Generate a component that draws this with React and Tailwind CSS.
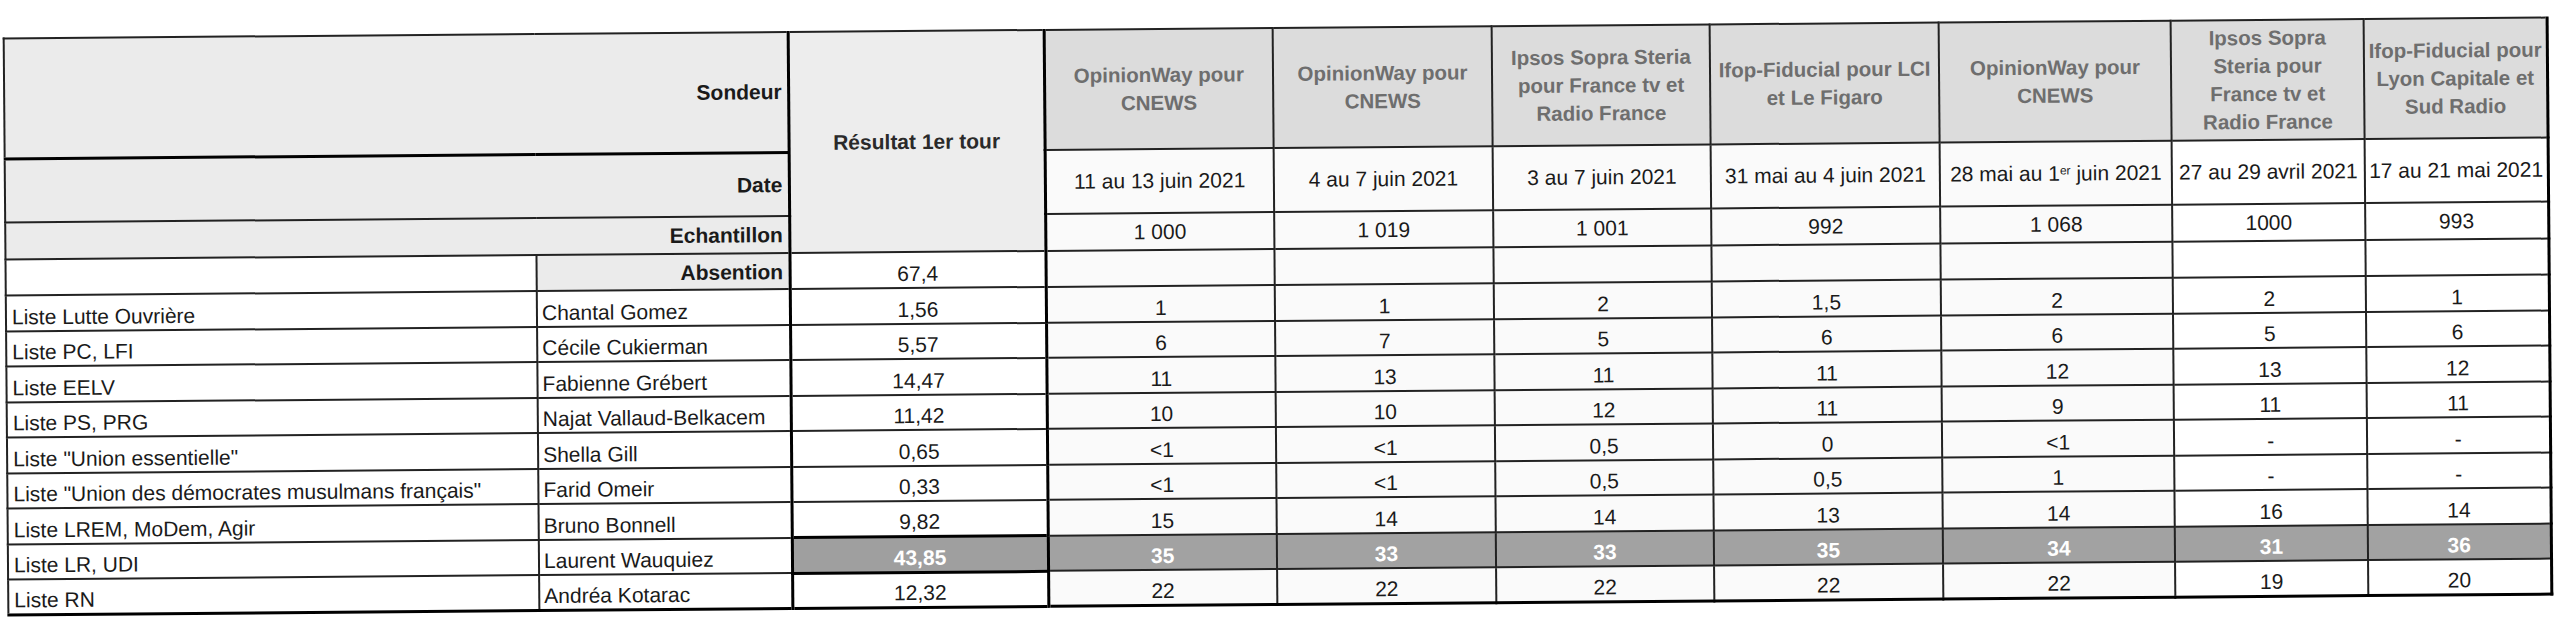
import React from 'react';

const polls = [
    { head: ['OpinionWay pour', 'CNEWS'], date: '11 au 13 juin 2021', n: '1 000', w: 'w-[229px]', tint: true },
    { head: ['OpinionWay pour', 'CNEWS'], date: '4 au 7 juin 2021', n: '1 019', w: 'w-[219px]', tint: true },
    { head: ['Ipsos Sopra Steria', 'pour France tv et', 'Radio France'], date: '3 au 7 juin 2021', n: '1 001', w: 'w-[218px]', tint: true },
    { head: ['Ifop-Fiducial pour LCI', 'et Le Figaro'], date: '31 mai au 4 juin 2021', n: '992', w: 'w-[229px]', tint: true },
    { head: ['OpinionWay pour', 'CNEWS'], date: 'er', n: '1 068', w: 'w-[232px]', tint: true },
    { head: ['Ipsos Sopra', 'Steria pour', 'France tv et', 'Radio France'], date: '27 au 29 avril 2021', n: '1000', w: 'w-[193px]', tint: false },
    { head: ['Ifop-Fiducial pour', 'Lyon Capitale et', 'Sud Radio'], date: '17 au 21 mai 2021', n: '993', w: 'w-[183px]', tint: false },
];

const rows = [
    ['Liste Lutte Ouvrière', 'Chantal Gomez', '1,56', ['1', '1', '2', '1,5', '2', '2', '1']],
    ['Liste PC, LFI', 'Cécile Cukierman', '5,57', ['6', '7', '5', '6', '6', '5', '6']],
    ['Liste EELV', 'Fabienne Grébert', '14,47', ['11', '13', '11', '11', '12', '13', '12']],
    ['Liste PS, PRG', 'Najat Vallaud-Belkacem', '11,42', ['10', '10', '12', '11', '9', '11', '11']],
    ['Liste "Union essentielle"', 'Shella Gill', '0,65', ['<1', '<1', '0,5', '0', '<1', '-', '-']],
    ['Liste "Union des démocrates musulmans français"', 'Farid Omeir', '0,33', ['<1', '<1', '0,5', '0,5', '1', '-', '-']],
    ['Liste LREM, MoDem, Agir', 'Bruno Bonnell', '9,82', ['15', '14', '14', '13', '14', '16', '14']],
    ['Liste LR, UDI', 'Laurent Wauquiez', '43,85', ['35', '33', '33', '35', '34', '31', '36'], true],
    ['Liste RN', 'Andréa Kotarac', '12,32', ['22', '22', '22', '22', '22', '19', '20']],
];

const cell = 'border-2 border-[#222]';
const resCol = 'border-x-[3px] border-x-black';

const DateText = ({ p }) =>
    p.date === 'er' ? (
        <>28 mai au 1<sup className="text-[12px]">er</sup> juin 2021</>
    ) : (
        p.date
    );

export default function App() {
    return (
        <div className="bg-white min-h-[633px] pt-[27px] pl-[5px] font-['Liberation_Sans',Arial,sans-serif] text-[21px] text-[#1a1a1a]">
            <div className="w-[2543px] rotate-[-0.47deg]">
                <table className="table-fixed border-collapse w-[2543px] border-b-[3px] border-b-black border-r-[3px] border-r-black">
                    <colgroup>
                        <col className="w-[531px]" />
                        <col className="w-[253px]" />
                        <col className="w-[256px]" />
                        {polls.map((p, i) => (
                            <col key={i} className={p.w} />
                        ))}
                    </colgroup>
                    <tbody>
                        <tr className="h-[120px]">
                            <td colSpan={2} className={`${cell} border-b-[3px] border-b-black bg-[#ebebeb] text-right font-bold px-[5px]`}>
                                Sondeur
                            </td>
                            <td rowSpan={3} className={`${cell} ${resCol} bg-[#ededed] text-center font-bold text-[#2a2a2a]`}>
                                Résultat 1er tour
                            </td>
                            {polls.map((p, i) => (
                                <td key={i} className={`${cell} bg-[#dcdcdc] text-center font-bold text-[20.5px] leading-[28px] text-[#6e6e6e] whitespace-nowrap`}>
                                    {p.head.map((l, j) => (
                                        <div key={j}>{l}</div>
                                    ))}
                                </td>
                            ))}
                        </tr>
                        <tr className="h-[64px]">
                            <td colSpan={2} className={`${cell} border-t-[3px] border-t-black bg-[#ebebeb] text-right font-bold px-[5px]`}>
                                Date
                            </td>
                            {polls.map((p, i) => (
                                <td key={i} className={`${cell} ${p.tint ? 'bg-[#fafafa]' : 'bg-white'} text-center whitespace-nowrap px-0`}>
                                    <DateText p={p} />
                                </td>
                            ))}
                        </tr>
                        <tr className="h-[37px]">
                            <td colSpan={2} className={`${cell} bg-[#ebebeb] text-right font-bold px-[5px] leading-none`}>
                                Echantillon
                            </td>
                            {polls.map((p, i) => (
                                <td key={i} className={`${cell} ${p.tint ? 'bg-[#fafafa]' : 'bg-white'} text-center leading-none`}>
                                    {p.n}
                                </td>
                            ))}
                        </tr>
                        <tr className="h-[36px]">
                            <td className={`${cell} bg-white`}></td>
                            <td className={`${cell} bg-[#ebebeb] text-right font-bold px-[5px] leading-none`}>Absention</td>
                            <td className={`${cell} ${resCol} bg-white text-center align-bottom leading-[26px]`}>67,4</td>
                            {polls.map((p, i) => (
                                <td key={i} className={`${cell} ${p.tint ? 'bg-[#fafafa]' : 'bg-white'}`}></td>
                            ))}
                        </tr>
                        {rows.map(([party, name, res, vals, hl], r) => (
                            <tr key={r} className="h-[35.5px]">
                                <td className={`${cell} bg-white px-[5px] align-bottom leading-[26px] whitespace-nowrap`}>{party}</td>
                                <td className={`${cell} bg-white px-[4px] align-bottom leading-[26px] whitespace-nowrap`}>{name}</td>
                                <td
                                    className={`${cell} ${resCol} text-center align-bottom leading-[26px] ${
                                        hl ? 'border-y-[3px] border-y-black bg-[#9f9f9f] text-white font-bold' : 'bg-white'
                                    }`}
                                >
                                    {res}
                                </td>
                                {vals.map((v, i) => (
                                    <td
                                        key={i}
                                        className={`${cell} text-center align-bottom leading-[26px] ${
                                            hl ? 'bg-[#a2a2a2] text-white font-bold' : polls[i].tint ? 'bg-[#fafafa]' : 'bg-white'
                                        }`}
                                    >
                                        {v}
                                    </td>
                                ))}
                            </tr>
                        ))}
                    </tbody>
                </table>
            </div>
        </div>
    );
}
